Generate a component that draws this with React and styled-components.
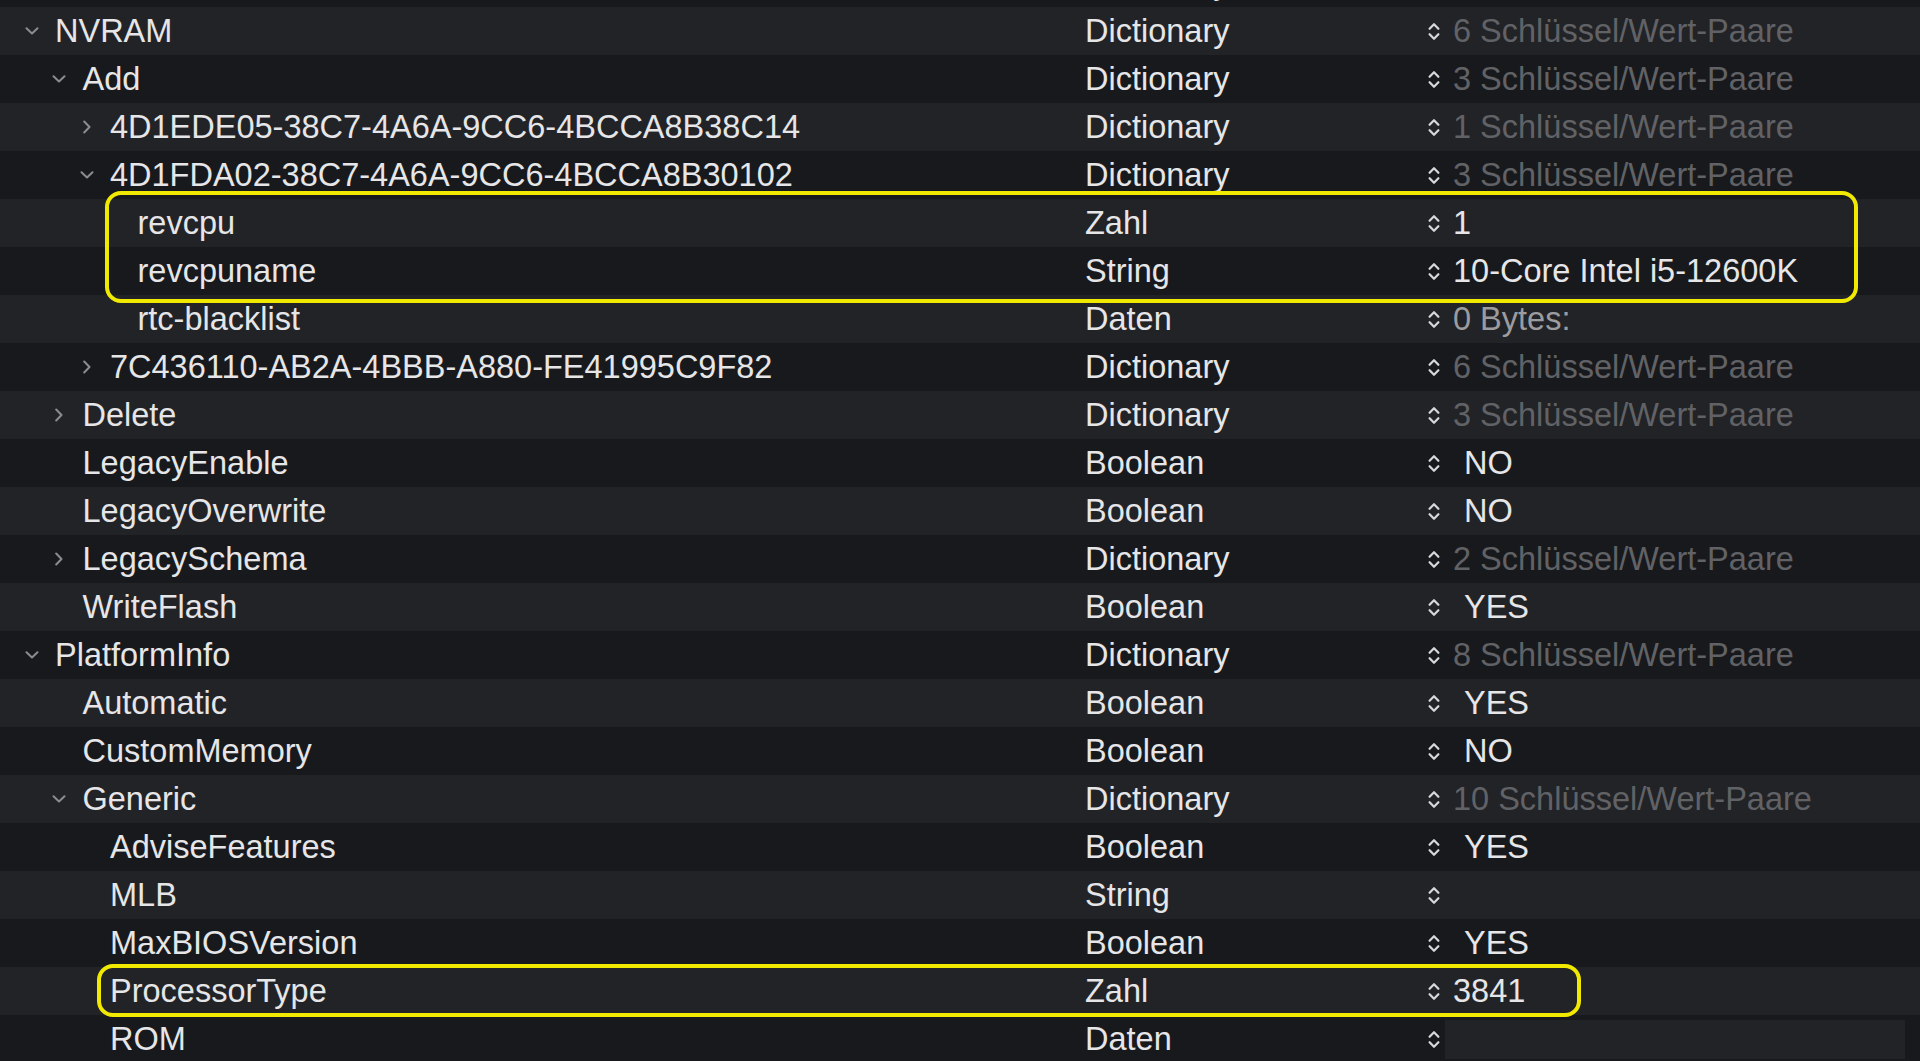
import React from 'react';
import styled, { createGlobalStyle } from 'styled-components';

const GlobalStyle = createGlobalStyle`
  html, body {
    margin: 0;
    padding: 0;
    background: #18191c;
    overflow: hidden;
  }
  body {
    font-family: 'Liberation Sans', Arial, Helvetica, sans-serif;
  }
`;

const ROW_H = 48;

const Page = styled.div`
  width: 1920px;
  height: 1061px;
  overflow: hidden;
  background: #18191c;
`;

const Rows = styled.div`
  position: relative;
  margin-top: ${7 - ROW_H}px;
`;

const Row = styled.div`
  display: grid;
  grid-template-columns: 1075px 343px 1fr;
  height: ${ROW_H}px;
  align-items: center;
  background: ${(p) => (p.$light ? '#222327' : '#18191c')};
  font-size: 32.5px;
  color: #e6e6e8;
  white-space: nowrap;
`;

const KeyCell = styled.div`
  display: flex;
  align-items: center;
  padding-left: ${(p) => 24.5 + p.$level * 27.5}px;
  height: 100%;
`;

const Disclosure = styled.span`
  width: 14px;
  height: 14px;
  display: flex;
  align-items: center;
  justify-content: center;
  margin-right: 16.5px;
  flex-shrink: 0;
`;

const TypeCell = styled.div`
  padding-left: 10px;
`;

const ValueCell = styled.div`
  display: flex;
  align-items: center;
  height: 100%;
  padding-left: 10px;
`;

const Stepper = styled.span`
  width: 12px;
  height: 19px;
  display: flex;
  flex-shrink: 0;
  margin-right: 13px;
`;

const Value = styled.span`
  color: ${(p) => (p.$tone === 'dim' ? '#616266' : p.$tone === 'soft' ? '#9c9c9f' : '#e6e6e8')};
  padding-left: ${(p) => (p.$pop ? 11 : 0)}px;
`;

const Field = styled.div`
  width: 460px;
  height: 39px;
  margin-left: -8px;
  background: #222327;
`;

const Highlight = styled.div`
  position: absolute;
  border: 4px solid #f2e900;
  border-radius: 16px;
  box-sizing: border-box;
  pointer-events: none;
`;

const ChevronDown = () => (
  <svg width="14" height="8" viewBox="0 0 14 8">
    <path d="M1.5 1.2 L7 6.5 L12.5 1.2" fill="none" stroke="#8c8c90" strokeWidth="2" strokeLinecap="round" strokeLinejoin="round" />
  </svg>
);

const ChevronRight = () => (
  <svg width="8" height="14" viewBox="0 0 8 14">
    <path d="M1.2 1.5 L6.5 7 L1.2 12.5" fill="none" stroke="#8c8c90" strokeWidth="2" strokeLinecap="round" strokeLinejoin="round" />
  </svg>
);

const StepperIcon = () => (
  <svg width="12" height="19" viewBox="0 0 12 19">
    <path d="M1.6 6.8 L6 2.2 L10.4 6.8 M1.6 12.2 L6 16.8 L10.4 12.2" fill="none" stroke="#d8d8da" strokeWidth="2.2" strokeLinecap="round" strokeLinejoin="round" />
  </svg>
);

const pairs = (n) => `${n} Schlüssel/Wert-Paare`;

const rows = [
  { key: '', level: 0, type: 'Dictionary', value: '', tone: 'dim' },
  { key: 'NVRAM', level: 0, open: true, type: 'Dictionary', value: pairs(6), tone: 'dim' },
  { key: 'Add', level: 1, open: true, type: 'Dictionary', value: pairs(3), tone: 'dim' },
  { key: '4D1EDE05-38C7-4A6A-9CC6-4BCCA8B38C14', level: 2, open: false, type: 'Dictionary', value: pairs(1), tone: 'dim' },
  { key: '4D1FDA02-38C7-4A6A-9CC6-4BCCA8B30102', level: 2, open: true, type: 'Dictionary', value: pairs(3), tone: 'dim' },
  { key: 'revcpu', level: 3, type: 'Zahl', value: '1' },
  { key: 'revcpuname', level: 3, type: 'String', value: '10-Core Intel i5-12600K' },
  { key: 'rtc-blacklist', level: 3, type: 'Daten', value: '0 Bytes:', tone: 'soft' },
  { key: '7C436110-AB2A-4BBB-A880-FE41995C9F82', level: 2, open: false, type: 'Dictionary', value: pairs(6), tone: 'dim' },
  { key: 'Delete', level: 1, open: false, type: 'Dictionary', value: pairs(3), tone: 'dim' },
  { key: 'LegacyEnable', level: 1, type: 'Boolean', value: 'NO', pop: true },
  { key: 'LegacyOverwrite', level: 1, type: 'Boolean', value: 'NO', pop: true },
  { key: 'LegacySchema', level: 1, open: false, type: 'Dictionary', value: pairs(2), tone: 'dim' },
  { key: 'WriteFlash', level: 1, type: 'Boolean', value: 'YES', pop: true },
  { key: 'PlatformInfo', level: 0, open: true, type: 'Dictionary', value: pairs(8), tone: 'dim' },
  { key: 'Automatic', level: 1, type: 'Boolean', value: 'YES', pop: true },
  { key: 'CustomMemory', level: 1, type: 'Boolean', value: 'NO', pop: true },
  { key: 'Generic', level: 1, open: true, type: 'Dictionary', value: pairs(10), tone: 'dim' },
  { key: 'AdviseFeatures', level: 2, type: 'Boolean', value: 'YES', pop: true },
  { key: 'MLB', level: 2, type: 'String', value: '' },
  { key: 'MaxBIOSVersion', level: 2, type: 'Boolean', value: 'YES', pop: true },
  { key: 'ProcessorType', level: 2, type: 'Zahl', value: '3841' },
  { key: 'ROM', level: 2, type: 'Daten', field: true },
];

// highlighted groups: first row index, row count, horizontal extent, overhang
const highlights = [
  { from: 5, count: 2, left: 105, right: 1858, over: 8 },
  { from: 21, count: 1, left: 97, right: 1581, over: 3 },
];

export default function App() {
  return (
    <Page>
      <GlobalStyle />
      <Rows>
        {rows.map((r, i) => (
          <Row key={i} $light={i % 2 === 1}>
            <KeyCell $level={r.level}>
              <Disclosure>
                {r.open === true && <ChevronDown />}
                {r.open === false && <ChevronRight />}
              </Disclosure>
              {r.key}
            </KeyCell>
            <TypeCell>{r.type}</TypeCell>
            <ValueCell>
              <Stepper>
                <StepperIcon />
              </Stepper>
              {r.field ? (
                <Field />
              ) : (
                <Value $tone={r.tone} $pop={r.pop}>{r.value}</Value>
              )}
            </ValueCell>
          </Row>
        ))}
        {highlights.map((h, i) => (
          <Highlight
            key={i}
            style={{
              top: h.from * ROW_H - h.over,
              height: h.count * ROW_H + h.over * 2 - (i === 1 ? 1 : 0),
              left: h.left,
              width: h.right - h.left,
            }}
          />
        ))}
      </Rows>
    </Page>
  );
}
